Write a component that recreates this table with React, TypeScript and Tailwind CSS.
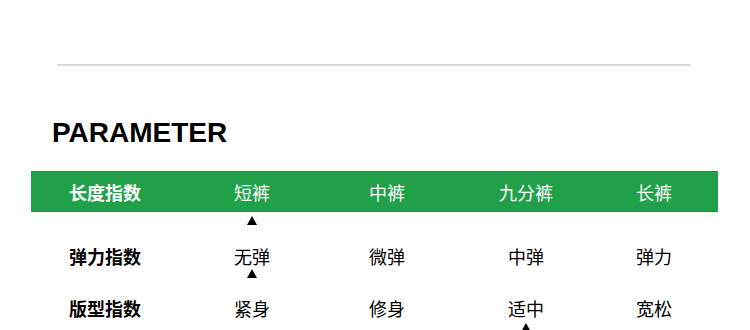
const cjk = "font-['Noto_Sans_CJK_SC',sans-serif]";
const cols = "grid grid-cols-[148px_146px_124px_154px_102px] items-center";

const header = ["长度指数", "短裤", "中裤", "九分裤", "长裤"];
const rows = [
  ["弹力指数", "无弹", "微弹", "中弹", "弹力"],
  ["版型指数", "紧身", "修身", "适中", "宽松"],
];

function Arrow() {
  return (
    <svg width="10" height="9" viewBox="0 0 10 9" className="block">
      <polygon points="5,0 10,9 0,9" fill="#000" />
    </svg>
  );
}

// marks which column is picked, sits under the row above it
function MarkerRow({ col, className }: { col: number; className: string }) {
  return (
    <div className={`${cols} ml-[31px] h-[9px] ${className}`}>
      {[0, 1, 2, 3, 4].map((i) => (
        <div key={i} className="flex justify-center">
          {i === col && <Arrow />}
        </div>
      ))}
    </div>
  );
}

export default function App() {
  return (
    <div className="w-[750px] h-[330px] bg-white overflow-hidden pt-[64px]">
      {/* Divider */}
      <div className="ml-[57px] w-[634px] h-[2px] bg-[#dadada]" />

      <h2 className="ml-[52px] mt-[53px] text-[28px] leading-none font-bold text-black font-['Liberation_Sans',Arial,sans-serif]">
        PARAMETER
      </h2>

      {/* Header bar */}
      <div
        className={`${cols} ml-[31px] mt-[24px] w-[687px] h-[41px] bg-[#21a04a] border-y border-[#1c9242] ${cjk}`}
      >
        {header.map((h, i) => (
          <div
            key={h}
            className={`text-center text-[18px] leading-[20px] text-white ${i === 0 ? "font-bold" : "font-normal"}`}
          >
            {h}
          </div>
        ))}
      </div>

      <MarkerRow col={1} className="mt-[4px]" />

      {rows.map((r, ri) => (
        <div key={ri}>
          <div className={`${cols} ml-[31px] h-[20px] ${ri === 0 ? "mt-[21px]" : "mt-[20px]"} ${cjk}`}>
            {r.map((v, i) => (
              <div
                key={v}
                className={`text-center text-[18px] leading-[20px] text-black ${i === 0 ? "font-bold" : "font-normal"}`}
              >
                {v}
              </div>
            ))}
          </div>
          <MarkerRow col={ri === 0 ? 1 : 3} className={ri === 0 ? "mt-[3px]" : "mt-[5px]"} />
        </div>
      ))}
    </div>
  );
}
